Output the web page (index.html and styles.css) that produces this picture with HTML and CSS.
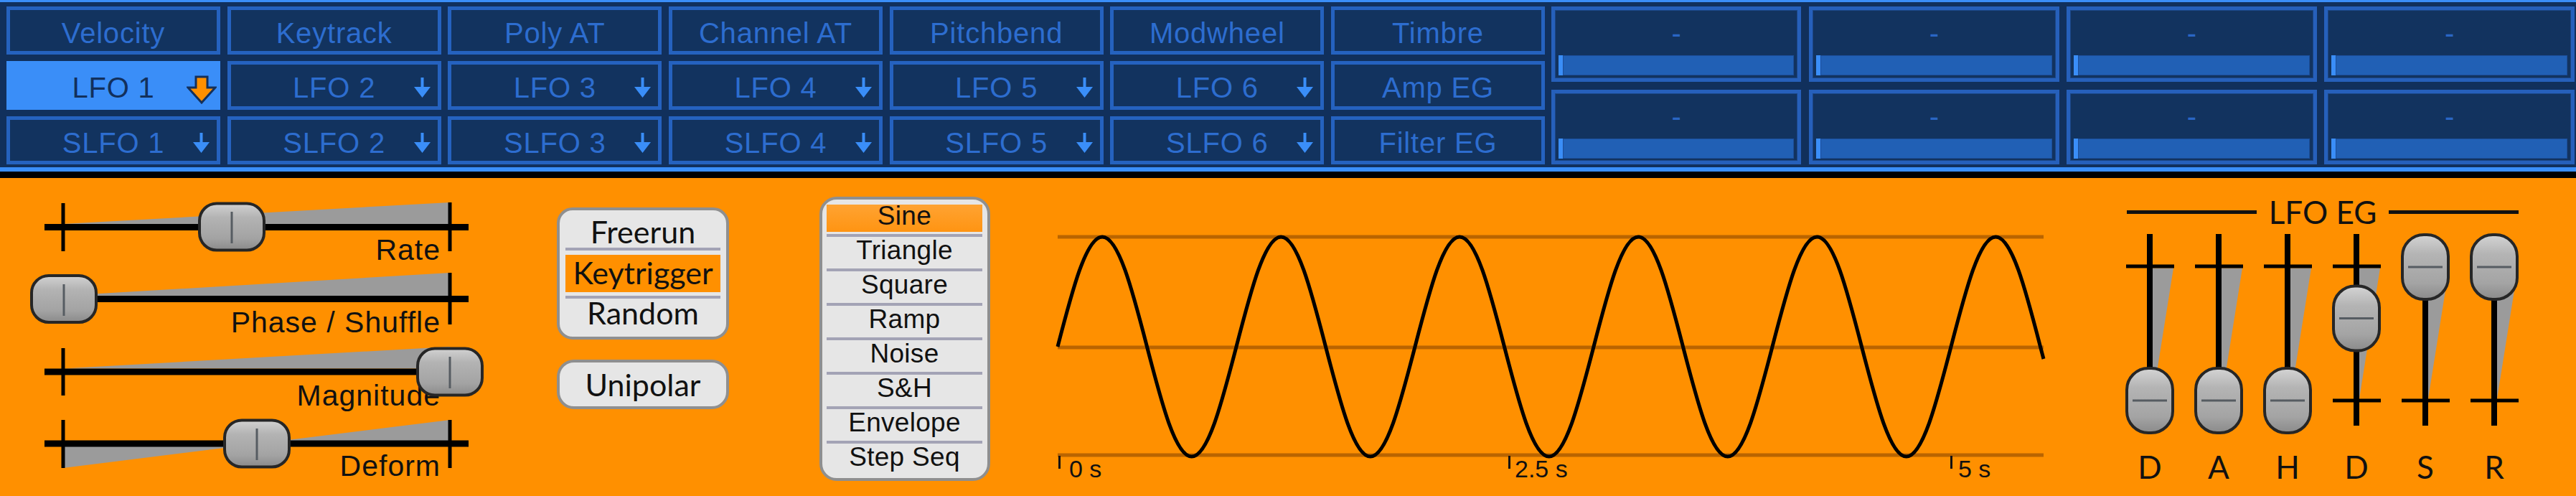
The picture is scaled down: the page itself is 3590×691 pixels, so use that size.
FILE: index.html
```html
<!DOCTYPE html>
<html>
<head>
<meta charset="utf-8">
<title>LFO</title>
<link rel="stylesheet" href="styles.css">
</head>
<body>
<div class="app">
  <header class="modbar">
    <div class="srcgrid">
      <div class="src">Velocity</div>
      <div class="src">Keytrack</div>
      <div class="src">Poly AT</div>
      <div class="src">Channel AT</div>
      <div class="src">Pitchbend</div>
      <div class="src">Modwheel</div>
      <div class="src">Timbre</div>

      <div class="src sel">LFO 1<svg class="arrow big" viewBox="0 0 42 40"><path d="M13 2H29V17H40L21 38L2 17H13Z"/></svg></div>
      <div class="src">LFO 2<svg class="arrow" viewBox="0 0 23 28"><rect x="9.5" y="0" width="4" height="15"/><polygon points="0,13 23,13 11.5,28"/></svg></div>
      <div class="src">LFO 3<svg class="arrow" viewBox="0 0 23 28"><rect x="9.5" y="0" width="4" height="15"/><polygon points="0,13 23,13 11.5,28"/></svg></div>
      <div class="src">LFO 4<svg class="arrow" viewBox="0 0 23 28"><rect x="9.5" y="0" width="4" height="15"/><polygon points="0,13 23,13 11.5,28"/></svg></div>
      <div class="src">LFO 5<svg class="arrow" viewBox="0 0 23 28"><rect x="9.5" y="0" width="4" height="15"/><polygon points="0,13 23,13 11.5,28"/></svg></div>
      <div class="src">LFO 6<svg class="arrow" viewBox="0 0 23 28"><rect x="9.5" y="0" width="4" height="15"/><polygon points="0,13 23,13 11.5,28"/></svg></div>
      <div class="src">Amp EG</div>

      <div class="src">SLFO 1<svg class="arrow" viewBox="0 0 23 28"><rect x="9.5" y="0" width="4" height="15"/><polygon points="0,13 23,13 11.5,28"/></svg></div>
      <div class="src">SLFO 2<svg class="arrow" viewBox="0 0 23 28"><rect x="9.5" y="0" width="4" height="15"/><polygon points="0,13 23,13 11.5,28"/></svg></div>
      <div class="src">SLFO 3<svg class="arrow" viewBox="0 0 23 28"><rect x="9.5" y="0" width="4" height="15"/><polygon points="0,13 23,13 11.5,28"/></svg></div>
      <div class="src">SLFO 4<svg class="arrow" viewBox="0 0 23 28"><rect x="9.5" y="0" width="4" height="15"/><polygon points="0,13 23,13 11.5,28"/></svg></div>
      <div class="src">SLFO 5<svg class="arrow" viewBox="0 0 23 28"><rect x="9.5" y="0" width="4" height="15"/><polygon points="0,13 23,13 11.5,28"/></svg></div>
      <div class="src">SLFO 6<svg class="arrow" viewBox="0 0 23 28"><rect x="9.5" y="0" width="4" height="15"/><polygon points="0,13 23,13 11.5,28"/></svg></div>
      <div class="src">Filter EG</div>
    </div>
    <div class="macros">
      <div class="macro"><div class="mlabel">-</div><div class="mbar"></div></div>
      <div class="macro"><div class="mlabel">-</div><div class="mbar"></div></div>
      <div class="macro"><div class="mlabel">-</div><div class="mbar"></div></div>
      <div class="macro"><div class="mlabel">-</div><div class="mbar"></div></div>
      <div class="macro"><div class="mlabel">-</div><div class="mbar"></div></div>
      <div class="macro"><div class="mlabel">-</div><div class="mbar"></div></div>
      <div class="macro"><div class="mlabel">-</div><div class="mbar"></div></div>
      <div class="macro"><div class="mlabel">-</div><div class="mbar"></div></div>
    </div>
  </header>
  <div class="divider"></div>
  <main class="lfo">
    <svg class="sliders" width="700" height="443" viewBox="0 0 700 443">
      <defs>
        <linearGradient id="hk" x1="0" y1="0" x2="0" y2="1">
          <stop offset="0" stop-color="#d2d2d2"/>
          <stop offset="0.3" stop-color="#b3b3b3"/>
          <stop offset="0.75" stop-color="#a3a3a3"/>
          <stop offset="1" stop-color="#8a8a8a"/>
        </linearGradient>
      </defs>
      <!-- Rate -->
      <polygon class="wedge" points="88,64 627,34 627,64"/>
      <rect class="trk" x="62" y="64" width="591" height="9"/>
      <rect class="trk" x="85.5" y="35" width="5" height="67"/>
      <rect class="trk" x="624.5" y="34" width="5" height="68"/>
      <text class="lbl" x="614" y="114">Rate</text>
      <rect class="knob" x="278" y="35.5" width="90" height="65" rx="24" fill="url(#hk)"/>
      <line class="kline" x1="323" y1="47" x2="323" y2="91"/>
      <!-- Phase -->
      <polygon class="wedge" points="88,164 627,132 627,164"/>
      <rect class="trk" x="62" y="164" width="591" height="9"/>
      <rect class="trk" x="85.5" y="136" width="5" height="66"/>
      <rect class="trk" x="624.5" y="132" width="5" height="72"/>
      <text class="lbl" x="614" y="215">Phase / Shuffle</text>
      <rect class="knob" x="44" y="136" width="90" height="65" rx="24" fill="url(#hk)"/>
      <line class="kline" x1="89" y1="148" x2="89" y2="192"/>
      <!-- Magnitude -->
      <polygon class="wedge" points="88,265.5 627,235 627,265.5"/>
      <rect class="trk" x="62" y="265.5" width="591" height="9"/>
      <rect class="trk" x="85.5" y="237" width="5" height="66"/>
      <rect class="trk" x="624.5" y="237" width="5" height="66"/>
      <text class="lbl" x="614" y="317">Magnitude</text>
      <rect class="knob" x="582" y="237.5" width="90" height="65" rx="24" fill="url(#hk)"/>
      <line class="kline" x1="627" y1="249" x2="627" y2="293"/>
      <!-- Deform -->
      <polygon class="wedge" points="88,370 88,404 361,370"/>
      <polygon class="wedge" points="361,370 627,337 627,370"/>
      <rect class="trk" x="62" y="365.5" width="591" height="9"/>
      <rect class="trk" x="85.5" y="337" width="5" height="67"/>
      <rect class="trk" x="624.5" y="337" width="5" height="67"/>
      <text class="lbl" x="614" y="415">Deform</text>
      <rect class="knob" x="313" y="337.5" width="90" height="65" rx="24" fill="url(#hk)"/>
      <line class="kline" x1="358" y1="349" x2="358" y2="393"/>
    </svg>

    <div class="modes">
      <div class="seg">
        <div class="opt o1">Freerun</div>
        <div class="rule"></div>
        <div class="opt o2">Keytrigger</div>
        <div class="rule"></div>
        <div class="opt o3">Random</div>
      </div>
      <div class="btn">Unipolar</div>
    </div>

    <div class="waves">
      <div class="wi on">Sine</div>
      <div class="wr"></div>
      <div class="wi">Triangle</div>
      <div class="wr"></div>
      <div class="wi">Square</div>
      <div class="wr"></div>
      <div class="wi">Ramp</div>
      <div class="wr"></div>
      <div class="wi">Noise</div>
      <div class="wr"></div>
      <div class="wi">S&amp;H</div>
      <div class="wr"></div>
      <div class="wi">Envelope</div>
      <div class="wr"></div>
      <div class="wi">Step Seq</div>
    </div>

    <svg class="scope" width="1400" height="443" viewBox="0 0 1400 443">
      <line class="grid" x1="14" y1="82" x2="1388" y2="82"/>
      <line class="grid" x1="14" y1="236" x2="1388" y2="236"/>
      <line class="grid" x1="14" y1="386" x2="1388" y2="386"/>
      <path class="wave" d="M14,235
        c20.75,-80.1 39.84,-153 62.25,-153 c22.41,0 41.5,72.9 62.25,153 c20.75,80.1 39.84,153 62.25,153 c22.41,0 41.5,-72.9 62.25,-153
        c20.75,-80.1 39.84,-153 62.25,-153 c22.41,0 41.5,72.9 62.25,153 c20.75,80.1 39.84,153 62.25,153 c22.41,0 41.5,-72.9 62.25,-153
        c20.75,-80.1 39.84,-153 62.25,-153 c22.41,0 41.5,72.9 62.25,153 c20.75,80.1 39.84,153 62.25,153 c22.41,0 41.5,-72.9 62.25,-153
        c20.75,-80.1 39.84,-153 62.25,-153 c22.41,0 41.5,72.9 62.25,153 c20.75,80.1 39.84,153 62.25,153 c22.41,0 41.5,-72.9 62.25,-153
        c20.75,-80.1 39.84,-153 62.25,-153 c22.41,0 41.5,72.9 62.25,153 c20.75,80.1 39.84,153 62.25,153 c22.41,0 41.5,-72.9 62.25,-153
        c20.75,-80.1 39.84,-153 62.25,-153 c22.41,0 41.5,72.9 62.25,153 l4.5,17"/>
      <rect class="tick" x="15" y="387" width="3" height="18"/>
      <rect class="tick" x="642" y="387" width="3" height="18"/>
      <rect class="tick" x="1258" y="387" width="3" height="18"/>
      <text class="tlbl" x="30" y="417">0 s</text>
      <text class="tlbl" x="651" y="417">2.5 s</text>
      <text class="tlbl" x="1269" y="417">5 s</text>
    </svg>

    <section class="eg">
      <div class="eg-title"><span class="eg-line"></span><span class="eg-name">LFO EG</span><span class="eg-line"></span></div>
      <svg class="egs" width="576" height="305" viewBox="0 0 576 305">
        <defs>
          <linearGradient id="vk" x1="0" y1="0" x2="0" y2="1">
            <stop offset="0" stop-color="#d4d4d4"/>
            <stop offset="0.3" stop-color="#b4b4b4"/>
            <stop offset="0.75" stop-color="#a4a4a4"/>
            <stop offset="1" stop-color="#8a8a8a"/>
          </linearGradient>
        </defs>
        <!-- D -->
        <polygon class="wedge" points="52,53.5 81,53.5 52,235.5"/>
        <rect class="trk" x="44" y="6" width="8" height="267"/>
        <rect class="trk" x="15" y="48.5" width="67" height="5"/>
        <rect class="trk" x="15" y="235.5" width="67" height="5"/>
        <rect class="knob" x="16" y="193" width="64" height="90" rx="30" fill="url(#vk)"/>
        <line class="kline" x1="24" y1="238" x2="72" y2="238"/>
        <!-- A -->
        <polygon class="wedge" points="148,53.5 177,53.5 148,235.5"/>
        <rect class="trk" x="140" y="6" width="8" height="267"/>
        <rect class="trk" x="111" y="48.5" width="67" height="5"/>
        <rect class="trk" x="111" y="235.5" width="67" height="5"/>
        <rect class="knob" x="112" y="193" width="64" height="90" rx="30" fill="url(#vk)"/>
        <line class="kline" x1="120" y1="238" x2="168" y2="238"/>
        <!-- H -->
        <polygon class="wedge" points="244,53.5 273,53.5 244,235.5"/>
        <rect class="trk" x="236" y="6" width="8" height="267"/>
        <rect class="trk" x="207" y="48.5" width="67" height="5"/>
        <rect class="trk" x="207" y="235.5" width="67" height="5"/>
        <rect class="knob" x="208" y="193" width="64" height="90" rx="30" fill="url(#vk)"/>
        <line class="kline" x1="216" y1="238" x2="264" y2="238"/>
        <!-- D -->
        <polygon class="wedge" points="340,53.5 369,53.5 340,235.5"/>
        <rect class="trk" x="332" y="6" width="8" height="267"/>
        <rect class="trk" x="303" y="48.5" width="67" height="5"/>
        <rect class="trk" x="303" y="235.5" width="67" height="5"/>
        <rect class="knob" x="304" y="78.5" width="64" height="90" rx="30" fill="url(#vk)"/>
        <line class="kline" x1="312" y1="123.5" x2="360" y2="123.5"/>
        <!-- S -->
        <polygon class="wedge" points="436,53.5 465,53.5 436,235.5"/>
        <rect class="trk" x="428" y="6" width="8" height="267"/>
        <rect class="trk" x="399" y="48.5" width="67" height="5"/>
        <rect class="trk" x="399" y="235.5" width="67" height="5"/>
        <rect class="knob" x="400" y="7" width="64" height="90" rx="30" fill="url(#vk)"/>
        <line class="kline" x1="408" y1="52" x2="456" y2="52"/>
        <!-- R -->
        <polygon class="wedge" points="532,53.5 561,53.5 532,235.5"/>
        <rect class="trk" x="524" y="6" width="8" height="267"/>
        <rect class="trk" x="495" y="48.5" width="67" height="5"/>
        <rect class="trk" x="495" y="235.5" width="67" height="5"/>
        <rect class="knob" x="496" y="7" width="64" height="90" rx="30" fill="url(#vk)"/>
        <line class="kline" x1="504" y1="52" x2="552" y2="52"/>
      </svg>
      <div class="eg-labels"><span>D</span><span>A</span><span>H</span><span>D</span><span>S</span><span>R</span></div>
    </section>
  </main>
</div>
</body>
</html>
```

FILE: styles.css
```css
html, body {
  margin: 0;
  padding: 0;
}
body {
  width: 3590px;
  height: 691px;
  overflow: hidden;
  background: #ff9000;
}
.app {
  width: 3590px;
  display: flex;
  flex-direction: column;
}

/* ---------- modulation source bar ---------- */
.modbar {
  height: 220px;
  background: #11305c;
  border-top: 3px solid #3a8ef8;
  border-bottom: 6px solid #3a8ef8;
  padding: 6px 0 4px 9px;
  display: flex;
  gap: 9px;
}
.srcgrid {
  display: grid;
  grid-template-columns: repeat(7, 298px);
  grid-template-rows: 67px 68px 67px;
  column-gap: 9.67px;
  row-gap: 9px;
}
.src {
  position: relative;
  box-sizing: border-box;
  border: 5px solid #2562bf;
  background: #12335f;
  color: #2d6dcf;
  font-family: "Liberation Sans", Arial, sans-serif;
  font-size: 40px;
  line-height: 49px;
  padding-top: 8px;
  letter-spacing: 0.8px;
  text-align: center;
  white-space: nowrap;
}
.src.sel {
  background: #3a8ef8;
  border-color: #3a8ef8;
  color: #12305c;
}
.arrow {
  position: absolute;
  right: 10px;
  top: 18px;
  width: 23px;
  height: 28px;
  fill: #3a8ef8;
}
.arrow.big {
  right: 0;
  top: 15px;
  width: 42px;
  height: 40px;
  fill: #ff9000;
  stroke: #14305a;
  stroke-width: 3;
}
.macros {
  display: grid;
  grid-template-columns: repeat(4, 348.5px);
  grid-template-rows: 105px 104px;
  column-gap: 10.67px;
  row-gap: 11px;
}
.macro {
  box-sizing: border-box;
  border: 5px solid #2660bb;
  background: #12335f;
  box-shadow: inset 0 0 0 1px #1b4685;
  display: flex;
  flex-direction: column;
  padding: 0 5px 4px;
}
.mlabel {
  flex: 1;
  padding-top: 2px;
  line-height: 61px;
  text-align: center;
  font-family: "Liberation Sans", Arial, sans-serif;
  font-size: 40px;
  color: #2a66c4;
}
.mbar {
  flex: none;
  height: 28px;
  box-sizing: border-box;
  background: #2160b5;
  border-left: 6px solid #3a8ef8;
  box-shadow: inset 0 0 0 1px #1c4e9a;
}
.divider {
  height: 9px;
  background: #000;
}

/* ---------- LFO panel ---------- */
.lfo {
  height: 443px;
  background: #ff9000;
  display: flex;
  align-items: flex-start;
}
.sliders, .scope {
  flex: none;
  display: block;
}
.wedge { fill: #9b9b9b; }
.trk { fill: #000; }
.knob {
  stroke: #262626;
  stroke-width: 4;
}
.kline {
  stroke: #565c62;
  stroke-width: 3;
}
.lbl {
  font-family: "Liberation Sans", Arial, sans-serif;
  font-size: 41px;
  letter-spacing: 1px;
  text-anchor: end;
  fill: #111;
}

.modes {
  flex: none;
  margin-left: 76px;
  margin-top: 41px;
  width: 240px;
  display: flex;
  flex-direction: column;
  gap: 28px;
}
.seg {
  box-sizing: border-box;
  height: 184px;
  border: 4px solid #8f8f8f;
  border-radius: 22px;
  background: #e6e6e6;
  padding: 0 8px;
}
.opt {
  box-sizing: border-box;
  font-family: Lato, "Open Sans", sans-serif;
  font-size: 43px;
  color: #111;
  text-align: center;
  white-space: nowrap;
}
.o1 { height: 52px; padding-top: 8px; line-height: 44px; }
.o2 { height: 52px; margin: 6px 0 5px; padding-top: 3px; line-height: 44px; background: #ff9000; }
.o3 { height: 53px; line-height: 40px; }
.rule {
  height: 4px;
  background: #a3a3b5;
}
.btn {
  box-sizing: border-box;
  height: 69px;
  border: 4px solid #8f8f8f;
  border-radius: 24px;
  background: #e6e6e6;
  font-family: Lato, "Open Sans", sans-serif;
  font-size: 43px;
  line-height: 61px;
  text-align: center;
  color: #111;
}

.waves {
  flex: none;
  box-sizing: border-box;
  margin-left: 126px;
  margin-top: 26px;
  width: 238px;
  height: 396px;
  border: 4px solid #8f8f8f;
  border-radius: 24px;
  background: #e6e6e6;
  padding: 7px 7px 7px 6px;
}
.wi {
  box-sizing: border-box;
  height: 38px;
  line-height: 31px;
  font-family: "Liberation Sans", Arial, sans-serif;
  font-size: 37px;
  letter-spacing: 0.3px;
  text-align: center;
  color: #111;
  white-space: nowrap;
}
.wi.on {
  background: linear-gradient(#ffa332, #ff9412);
}
.wr {
  height: 4px;
  margin: 3px 0;
  background: #a3a3b5;
}

.scope {
  margin-left: 80px;
}
.grid {
  stroke: #b96400;
  stroke-width: 5;
}
.wave {
  fill: none;
  stroke: #000;
  stroke-width: 5;
  stroke-linejoin: round;
}
.tick { fill: #111; }
.tlbl {
  font-family: "Liberation Sans", Arial, sans-serif;
  font-size: 34px;
  fill: #111;
}

.eg {
  flex: none;
  margin-left: 88px;
  margin-top: 22px;
  width: 576px;
}
.eg-title {
  display: flex;
  align-items: center;
  gap: 17px;
  height: 50px;
  padding: 0 14px 0 16px;
}
.eg-line {
  flex: 1;
  height: 5px;
  background: #111;
}
.eg-name {
  font-family: Lato, "Open Sans", sans-serif;
  font-size: 44px;
  line-height: 50px;
  color: #111;
}
.egs {
  display: block;
}
.eg-labels {
  display: flex;
}
.eg-labels span {
  width: 96px;
  text-align: center;
  font-family: Lato, "Open Sans", sans-serif;
  font-size: 44px;
  line-height: 50px;
  color: #111;
}
```
